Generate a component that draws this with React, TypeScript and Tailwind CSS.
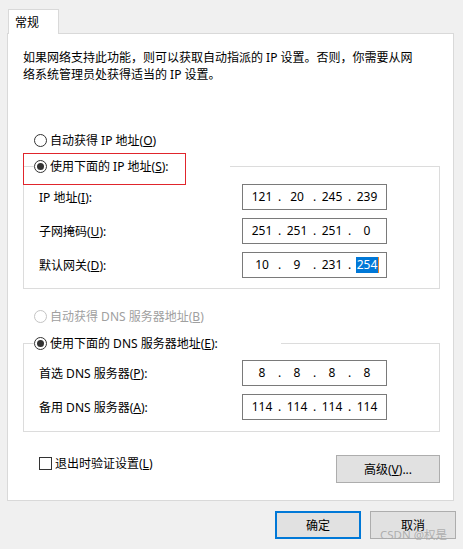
import React from "react";

const Radio = ({ checked, disabled }: { checked?: boolean; disabled?: boolean }) => (
  <span
    className={
      disabled
        ? "flex h-[13px] w-[13px] shrink-0 items-center justify-center rounded-full border border-[#c4c4c4] bg-white"
        : "flex h-[13px] w-[13px] shrink-0 items-center justify-center rounded-full border border-[#333333] bg-white"
    }
  >
    {checked && <span className="h-[7px] w-[7px] rounded-full bg-[#333333]" />}
  </span>
);

const IpBox = ({ parts, selectLast }: { parts: string[]; selectLast?: boolean }) => (
  <div className="flex h-[26px] w-[145px] shrink-0 items-center border border-[#7a7a7a] bg-white pl-[3px] leading-[16px]">
    {parts.map((p, i) => (
      <React.Fragment key={i}>
        <span className="flex w-[32px] justify-center">
          {selectLast && i === 3 ? (
            <span className="relative bg-[#0078d7] px-px text-white">
              {p}
              <span className="absolute right-[-1px] top-0 h-full w-px bg-[#e8862a]" />
            </span>
          ) : (
            p
          )}
        </span>
        {i < 3 && <span className="flex w-[3px] justify-center">.</span>}
      </React.Fragment>
    ))}
  </div>
);

const Row = ({ label, children }: { label: React.ReactNode; children: React.ReactNode }) => (
  <div className="flex items-center pl-[15px]">
    <span className="w-[203px] shrink-0">{label}</span>
    {children}
  </div>
);

export default function App() {
  return (
    <div className="relative h-[549px] w-[463px] overflow-hidden bg-[#f0f0f0] pt-[9px] font-['Noto_Sans','Noto_Sans_CJK_SC',sans-serif] text-[12px] leading-[17px] text-black">
      {/* tab */}
      <div className="pl-[8px]">
        <div className="relative z-10 -mb-px flex h-[25px] w-[51px] items-center border-l border-r border-t border-[#d9d9d9] bg-white pl-[6px]">
          常规
        </div>
      </div>

      {/* panel */}
      <div className="ml-[7px] flex h-[468px] w-[447px] flex-col border border-[#d9d9d9] bg-white">
        <p className="ml-[15px] mt-[15px] whitespace-nowrap">
          如果网络支持此功能，则可以获取自动指派的 IP 设置。否则，你需要从网
          <br />
          络系统管理员处获得适当的 IP 设置。
        </p>

        <div className="ml-[26px] mt-[47px] flex h-[20px] items-center">
          <Radio />
          <span className="ml-[3px]">
            自动获得 IP 地址(<u>O</u>)
          </span>
        </div>

        <fieldset className="ml-[15px] mt-[6px] w-[417px] border border-[#dcdcdc] px-0 pb-[10px]">
          <legend className="ml-[10px] w-[196px] p-0">
            <div className="flex h-[20px] items-center">
              <Radio checked />
              <span className="ml-[3px]">
                使用下面的 IP 地址(<u>S</u>):
              </span>
            </div>
          </legend>
          <div className="mt-[8px] flex flex-col gap-[8px]">
            <Row
              label={
                <>
                  IP 地址(<u>I</u>):
                </>
              }
            >
              <IpBox parts={["121", "20", "245", "239"]} />
            </Row>
            <Row
              label={
                <>
                  子网掩码(<u>U</u>):
                </>
              }
            >
              <IpBox parts={["251", "251", "251", "0"]} />
            </Row>
            <Row
              label={
                <>
                  默认网关(<u>D</u>):
                </>
              }
            >
              <IpBox parts={["10", "9", "231", "254"]} selectLast />
            </Row>
          </div>
        </fieldset>

        <div className="ml-[26px] mt-[17px] flex h-[20px] items-center text-[#a0a0a0]">
          <Radio disabled />
          <span className="ml-[3px]">
            自动获得 DNS 服务器地址(<u>B</u>)
          </span>
        </div>

        <fieldset className="ml-[15px] mt-[7px] w-[417px] border border-[#dcdcdc] px-0 pb-[11px]">
          <legend className="ml-[10px] w-[247px] p-0">
            <div className="flex h-[20px] items-center">
              <Radio checked />
              <span className="ml-[3px]">
                使用下面的 DNS 服务器地址(<u>E</u>):
              </span>
            </div>
          </legend>
          <div className="mt-[7px] flex flex-col gap-[8px]">
            <Row
              label={
                <>
                  首选 DNS 服务器(<u>P</u>):
                </>
              }
            >
              <IpBox parts={["8", "8", "8", "8"]} />
            </Row>
            <Row
              label={
                <>
                  备用 DNS 服务器(<u>A</u>):
                </>
              }
            >
              <IpBox parts={["114", "114", "114", "114"]} />
            </Row>
          </div>
        </fieldset>

        <div className="mt-[21px] flex items-start justify-between pl-[31px] pr-[13px]">
          <div className="flex h-[20px] items-center">
            <span className="h-[13px] w-[13px] border border-[#333333] bg-white" />
            <span className="ml-[3px]">
              退出时验证设置(<u>L</u>)
            </span>
          </div>
          <button className="mt-[2px] flex h-[28px] w-[104px] items-center justify-center border border-[#adadad] bg-[#e1e1e1]">
            高级(<u>V</u>)...
          </button>
        </div>
      </div>

      {/* footer buttons */}
      <div className="mt-[10px] flex justify-end gap-[9px] pr-[7px]">
        <button className="flex h-[28px] w-[86px] items-center justify-center border-2 border-[#0078d7] bg-[#e1e1e1]">
          确定
        </button>
        <button className="flex h-[28px] w-[86px] items-center justify-center border border-[#adadad] bg-[#e1e1e1]">
          取消
        </button>
      </div>

      {/* red annotation box */}
      <div className="pointer-events-none absolute left-[23px] top-[153px] h-[32px] w-[163px] border border-[#e0252c]" />

      {/* watermark */}
      <div className="pointer-events-none absolute bottom-[7px] right-[16px] text-[11.5px] leading-[15px] text-[#a8a8a8]/90">
        CSDN @权是
      </div>
    </div>
  );
}
